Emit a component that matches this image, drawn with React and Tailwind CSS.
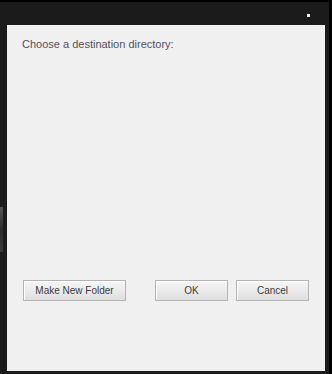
export default function App() {
  const btn =
    "h-[21px] border border-[#b4b4b4] bg-gradient-to-b from-[#f6f6f6] via-[#ebebeb] to-[#dedede] shadow-[inset_1px_1px_0_#ffffff] text-[10px] text-[#3c3c3c] flex items-center justify-center leading-none";
  return (
    <div
      className="w-[332px] h-[374px] bg-[#1b1b1b] border-t-2 border-t-black border-r-[3px] border-r-black flex flex-col relative"
      style={{ fontFamily: "'Liberation Sans', Arial, sans-serif" }}
    >
      <div className="absolute left-0 top-[205px] w-[3px] h-[45px] bg-gradient-to-b from-[#555] via-[#2c2c2c] to-[#3a3a3a]" />
      <div className="h-[23px] relative">
        <div className="absolute left-[307px] top-[12px] w-[3px] h-[3px] bg-[#eeeeee]" />
      </div>
      <div className="ml-[7px] w-[318px] h-[346px] bg-[#f0f0f0] flex flex-col">
        <div className="pl-[15px] pt-[13px] text-[11px] text-[#52525e] leading-[13px]">
          Choose a destination directory:
        </div>
        <div className="flex-1" />
        <div className="flex pl-[16px] mb-[70px]">
          <div className={btn + " w-[103px]"}>Make New Folder</div>
          <div className={btn + " w-[73px] ml-[29px]"}>OK</div>
          <div className={btn + " w-[73px] ml-[8px]"}>Cancel</div>
        </div>
      </div>
    </div>
  );
}
